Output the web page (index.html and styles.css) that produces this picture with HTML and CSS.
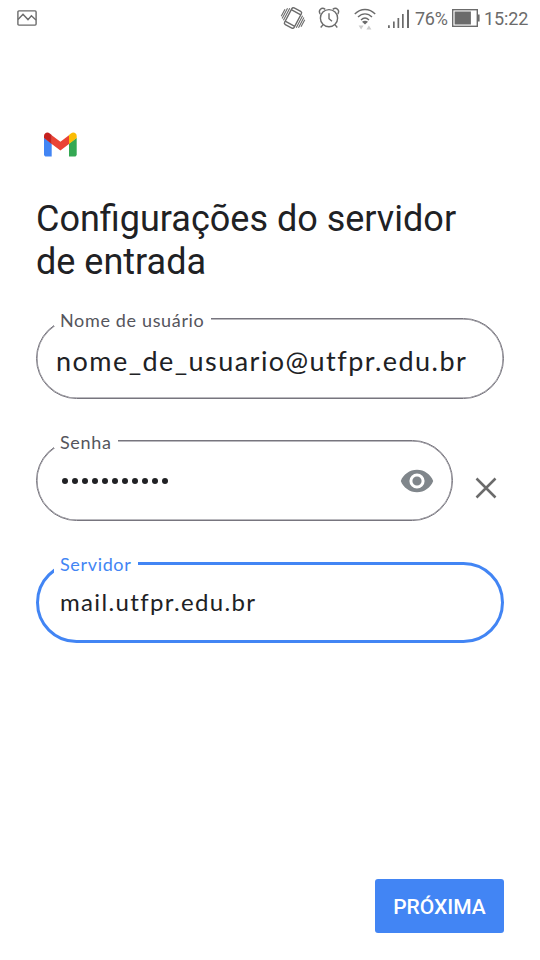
FILE: index.html
```html
<!DOCTYPE html>
<html lang="pt-BR">
<head>
<meta charset="utf-8">
<title>Configurações do servidor de entrada</title>
<link rel="stylesheet" href="styles.css">
</head>
<body>
<header class="status">
  <svg class="picture" width="20" height="16" viewBox="0 0 20 16"><rect x=".9" y=".9" width="18.2" height="14.2" rx="1"/><path d="M1 9.5 6 4.2l5 5.4 3.4-3.8L19 10"/></svg>
  <svg class="vibrate" width="26" height="24" viewBox="0 0 26 24"><g transform="rotate(28 13 12)"><rect x="7.6" y="2.6" width="10.8" height="18.8" rx="1.7"/><path d="M7.600 5.500h10.800M7.600 18.500h10.800"/><path class="thin" d="M5.600 5v13.500M3.600 6v11.500M1.800 8v8M20.400 5.500V19M22.400 6.500V18M24.200 8v8"/></g></svg>
  <svg class="alarm" width="22" height="22" viewBox="0 0 22 22"><circle cx="11" cy="11.2" r="8.6"/><path d="M11 6.3v5.4l3 2.5M5.1 17.6 2.7 20.5M16.9 17.6l2.4 2.9M2.2 7C-.2 3.3 3.7-.6 7.2 2.4M19.8 7c2.4-3.7-1.5-7.6-5-4.6"/></svg>
  <svg class="wifi" width="22" height="22" viewBox="0 0 22 22"><path d="M.8 6.1C6.6-.1 15.4-.1 21.2 6.1M4 9c4.2-4.2 9.8-4.2 14 0M7 11.9c2.4-2.3 5.6-2.3 8 0"/><path class="fill" d="M8 13.7q3-2 6 0L11 16.6z"/><path class="faint" d="M4.600 17.600h5L7.100 21.500zM12.400 21.500h5l-2.500-4z"/></svg>
  <svg class="signal" width="22" height="19" viewBox="0 0 22 19"><path class="fill" d="M0 16.300h1.800V19H0zM5 12.500h1.700V19H5zM9.500 9h1.700v10H9.500zM14 5h1.700v14H14zM19 .8h2V19h-2z"/></svg>
  <span class="percent">76%</span>
  <svg class="battery" width="28" height="18" viewBox="0 0 28 18"><rect x=".7" y=".7" width="24.600" height="16.600"/><path class="fill" d="M2.600 2.600h16.300v12.800H2.600zM26 5.500h1.600v7H26z"/></svg>
  <span class="clock">15:22</span>
</header>
<main>
  <svg class="logo" width="33" height="25" viewBox="0 0 33 25">
    <path fill="#4285f4" d="M0 5.800v16.500C0 23.700 1 24.600 2.300 24.600h5.400V11.500z"/>
    <path fill="#34a853" d="M25 11.500v13.100h5.400c1.300 0 2.300-.9 2.300-2.300V5.800z"/>
    <path fill="#ea4335" d="M7.400 3 16.400 9.700 25.300 3v8.700l-8.900 6.700-9-6.700z"/>
    <path fill="#c5221f" d="M0 4v2.100l7.700 5.800V3L5.800 1.400C3.300-.4 0 1.100 0 4z"/>
    <path fill="#fbbc04" d="M25 3v8.900l7.700-5.800V4c0-2.900-3.300-4.400-5.800-2.600z"/>
  </svg>
  <h1>Configurações do servidor<br>de entrada</h1>
  <section class="field user"><span class="label">Nome de usuário</span><span class="value">nome_de_usuario@utfpr.edu.br</span></section>
  <div class="row">
    <section class="field password"><span class="label">Senha</span>
      <span class="dots"><i></i><i></i><i></i><i></i><i></i><i></i><i></i><i></i><i></i><i></i><i></i></span>
      <svg class="eye" width="34" height="24" viewBox="0 0 34 24"><path fill="#80868b" fill-rule="evenodd" d="M17 .8C9.700.8 3.300 5.400.8 12c2.500 6.600 8.900 11.200 16.200 11.200S30.700 18.600 33.200 12C30.700 5.400 24.300.8 17 .8zM17 4.400a7.600 7.600 0 1 1 0 15.200 7.600 7.600 0 0 1 0-15.200zM17 7.400a4.600 4.600 0 1 0 0 9.200 4.600 4.600 0 0 0 0-9.200z"/></svg>
    </section>
    <svg class="close" width="22" height="22" viewBox="0 0 22 22"><path d="m1.500 1.500 19 19m0-19-19 19"/></svg>
  </div>
  <section class="field server"><span class="label">Servidor</span><span class="value">mail.utfpr.edu.br</span></section>
  <button>PRÓXIMA</button>
</main>
</body>
</html>
```
FILE: styles.css
```css
* { box-sizing: border-box; }
body {
  margin: 0;
  height: 960px;
  display: flex;
  flex-direction: column;
  background: #fff;
  color: #202124;
  font-family: Roboto, sans-serif;
}
svg { display: block; flex: none; }
.status {
  height: 36px;
  padding: 0 13px 0 17px;
  display: flex;
  align-items: center;
  color: #6b6b6b;
  font-size: 18px;
}
.status svg { fill: none; stroke: currentColor; stroke-width: 1.4; }
.status .fill { fill: currentColor; stroke: none; }
.status .faint { fill: #ccc; stroke: none; }
.status .thin { stroke-width: 1.1; }
.vibrate { margin-left: auto; }
.alarm { margin-left: 12px; }
.wifi { margin: 2px 0 0 14px; }
.signal { margin-left: 12px; }
.percent { width: 33px; margin-left: 5px; letter-spacing: -.3px; white-space: nowrap; }
.battery { margin-left: 4px; }
.clock { width: 43px; margin-left: 4px; letter-spacing: -.1px; white-space: nowrap; }
main {
  flex: 1;
  display: flex;
  flex-direction: column;
  padding: 95.5px 36px 27px;
}
.logo { margin-left: 8px; }
h1 {
  margin: 41.5px 0 34px;
  font-size: 36px;
  font-weight: 400;
  line-height: 43px;
  white-space: nowrap;
}
.field {
  position: relative;
  height: 81px;
  border: 1px solid #77757e;
  border-radius: 41px;
  box-shadow: inset 0 0 0 .5px #77757e;
  display: flex;
  align-items: center;
  font-family: Lato, sans-serif;
}
.label {
  position: absolute;
  top: -11px;
  left: 17px;
  height: 24px;
  padding-left: 6px;
  background: linear-gradient(#fff 18px, transparent 18px);
  color: #55555c;
  font-size: 18px;
  line-height: 24px;
  letter-spacing: .65px;
  white-space: nowrap;
}
.user .label { width: 157px; }
.password .label { width: 64px; }
.server .label { top: -13px; left: 15px; width: 84px; background: linear-gradient(#fff 21px, transparent 21px); color: #4285f4; }
.value { white-space: nowrap; }
.user .value { padding: 4px 0 0 19px; font-size: 27px; letter-spacing: 1.45px; }
.row { display: flex; align-items: center; margin: 41px 0; }
.password { width: 417px; }
.dots { display: flex; gap: 4px; margin: 1px 0 0 25px; }
.dots i { width: 6px; height: 6px; border-radius: 50%; background: #202124; }
.eye { margin: 0 18px 0 auto; }
.close { margin: 14px 0 0 22px; stroke: #6b6b6b; stroke-width: 2.5; }
.server { border: 3px solid #4285f4; box-shadow: none; }
.server .value { padding: 0 0 2px 21px; font-size: 24px; letter-spacing: 1.35px; }
button {
  align-self: flex-end;
  width: 129px;
  height: 54px;
  margin-top: auto;
  padding: 2px 0 0;
  border: 0;
  border-radius: 3px;
  background: #4285f4;
  color: #fff;
  font: 500 21px Roboto, sans-serif;
}
```
